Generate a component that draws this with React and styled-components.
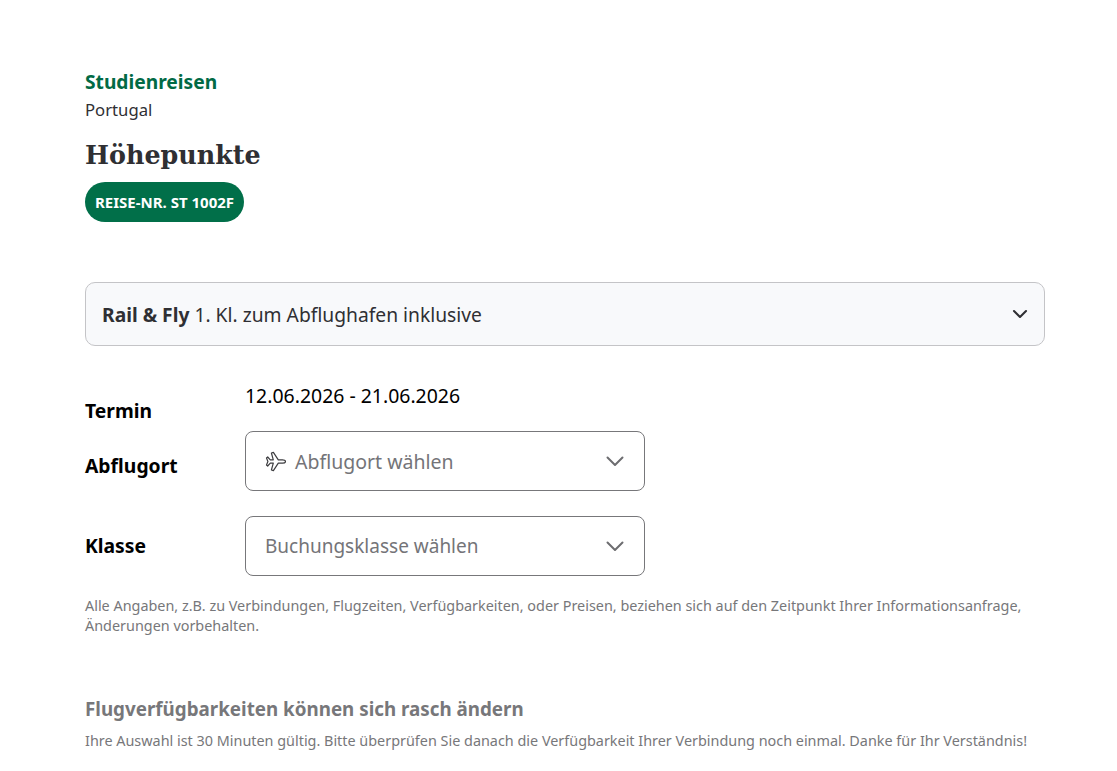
import React from 'react';
import styled, { createGlobalStyle } from 'styled-components';

const GlobalStyle = createGlobalStyle`
  html, body {
    margin: 0;
    background: #fff;
    font-family: "Noto Sans", "Open Sans", sans-serif;
    overflow: hidden;
  }
`;

const Page = styled.div`
  width: 960px;
  height: 701px;
  padding: 70px 0 0 85px;
  overflow: hidden;
`;

const Category = styled.div`
  color: #016a45;
  font-size: 19.2px;
  font-weight: 700;
  line-height: 24px;
`;

const Country = styled.div`
  color: #2f2f33;
  font-size: 16.7px;
  line-height: 24px;
  margin-top: 4px;
`;

const Title = styled.h1`
  color: #2f2f33;
  font-family: "DejaVu Serif", "Liberation Serif", serif;
  font-size: 25.4px;
  font-weight: 700;
  line-height: 36px;
  margin: 15px 0 9px;
`;

const Badge = styled.div`
  display: inline-flex;
  align-items: center;
  height: 40px;
  padding: 0 10px;
  border-radius: 20px;
  background: #016f49;
  color: #fff;
  font-size: 15px;
  font-weight: 700;
`;

const Accordion = styled.div`
  display: flex;
  align-items: center;
  justify-content: space-between;
  height: 62px;
  margin-top: 60px;
  padding: 0 15px 0 16px;
  border: 1px solid #c4c4c7;
  border-radius: 10px;
  background: #f8f9fb;
  color: #2f2f33;
  font-size: 19.25px;
`;

const Strong = styled.strong`
  font-weight: 700;
`;

const Form = styled.div`
  display: grid;
  grid-template-columns: 160px 400px;
  margin-top: 34px;
`;

const Label = styled.div`
  color: #000;
  font-size: 19.3px;
  font-weight: 700;
  line-height: 26px;
  margin-top: ${p => p.$offset}px;
`;

const DateLabel = styled(Label)`
  align-self: end;
  margin-bottom: 7px;
`;

const DateValue = styled.div`
  color: #000;
  font-size: 19.45px;
  line-height: 32px;
  height: 51px;
`;

const Select = styled.div`
  display: flex;
  align-items: center;
  gap: 9px;
  height: 58px;
  margin-bottom: 25px;
  padding: 0 17px 0 19px;
  border: 1px solid #77777a;
  border-radius: 8px;
  color: #747478;
  font-size: ${p => p.$size}px;
`;

const SelectText = styled.span`
  flex: 1;
`;

const Note = styled.p`
  color: #77777a;
  font-size: 14.4px;
  line-height: 20px;
  margin: 0;
`;

const NoteBlock = styled(Note)`
  margin-top: -5px;
`;

const Notice = styled.h2`
  color: #77777a;
  font-size: 18.8px;
  font-weight: 700;
  line-height: 24px;
  margin: 61px 0 10px;
`;

const AccordionChevron = () => (
  <svg width="18" height="18" viewBox="0 0 24 24" fill="none">
    <path d="M4 8l8 8 8-8" stroke="#2f2f33" strokeWidth="2.8" strokeLinecap="round" strokeLinejoin="round" />
  </svg>
);

const SelectChevron = () => (
  <svg width="24" height="24" viewBox="0 0 24 24" fill="none">
    <path d="M4.5 8.5l7.5 7.5 7.5-7.5" stroke="#6d6d70" strokeWidth="2" strokeLinecap="round" strokeLinejoin="round" />
  </svg>
);

const PlaneIcon = () => (
  <svg width="21" height="21" viewBox="0 0 21 21" fill="none">
    <path
      d="M1.5 7l1.2-1 2.6 2.8h3L6.4 2l2-.6 4.9 7.4h4.2c1.6 0 3 .8 3 1.7s-1.4 1.7-3 1.7h-4.2L8.4 19.6l-2-.6 1.9-6.8h-3l-2.6 2.8-1.2-1 1.4-3.5z"
      stroke="#3d3d40"
      strokeWidth="1.2"
      strokeLinejoin="round"
    />
  </svg>
);

const App = () => (
  <Page>
    <GlobalStyle />
    <Category>Studienreisen</Category>
    <Country>Portugal</Country>
    <Title>Höhepunkte</Title>
    <Badge>REISE-NR. ST 1002F</Badge>
    <Accordion>
      <span><Strong>Rail &amp; Fly</Strong> 1. Kl. zum Abflughafen inklusive</span>
      <AccordionChevron />
    </Accordion>
    <Form>
      <DateLabel>Termin</DateLabel>
      <DateValue>12.06.2026 - 21.06.2026</DateValue>
      <Label $offset={22}>Abflugort</Label>
      <Select $size={19.5}>
        <PlaneIcon />
        <SelectText>Abflugort wählen</SelectText>
        <SelectChevron />
      </Select>
      <Label $offset={17}>Klasse</Label>
      <Select $size={19}>
        <SelectText>Buchungsklasse wählen</SelectText>
        <SelectChevron />
      </Select>
    </Form>
    <NoteBlock>
      Alle Angaben, z.B. zu Verbindungen, Flugzeiten, Verfügbarkeiten, oder Preisen, beziehen sich auf den Zeitpunkt Ihrer Informationsanfrage, Änderungen vorbehalten.
    </NoteBlock>
    <Notice>Flugverfügbarkeiten können sich rasch ändern</Notice>
    <Note>Ihre Auswahl ist 30 Minuten gültig. Bitte überprüfen Sie danach die Verfügbarkeit Ihrer Verbindung noch einmal. Danke für Ihr Verständnis!</Note>
  </Page>
);

export default App;
